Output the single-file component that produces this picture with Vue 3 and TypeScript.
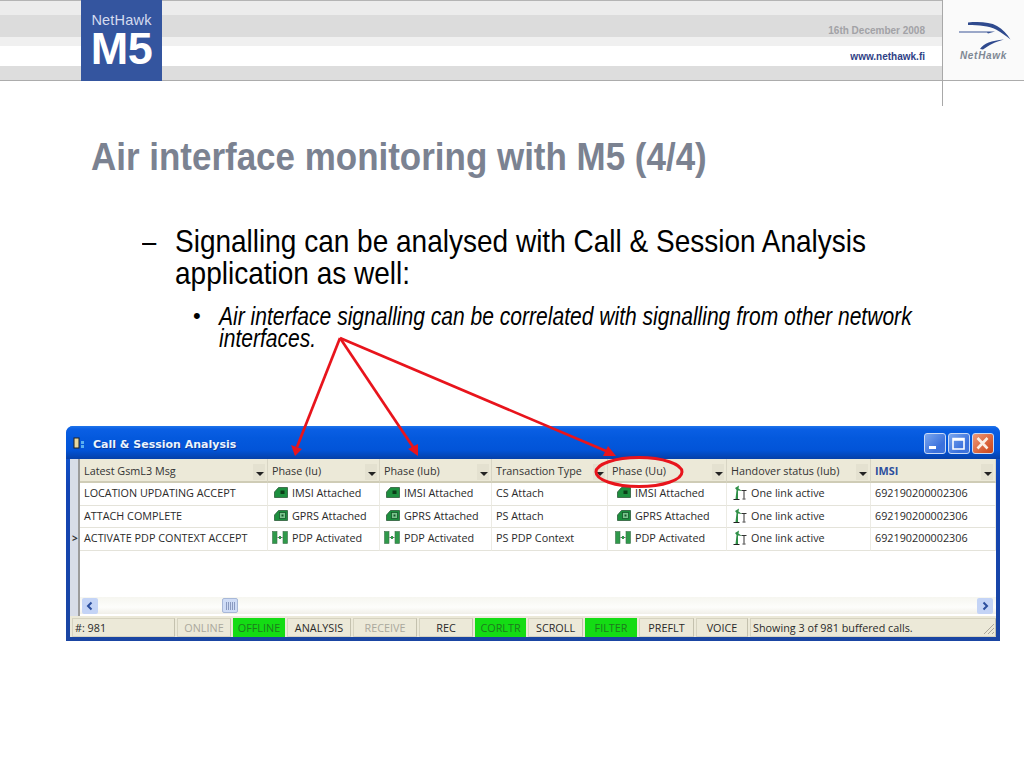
<script setup lang="ts">
type Cell = { text: string; icon?: 'imsi' | 'gprs' | 'pdp' | 'link' }
const columns = [
  { title: 'Latest GsmL3 Msg', width: 188 },
  { title: 'Phase (Iu)', width: 112 },
  { title: 'Phase (Iub)', width: 112 },
  { title: 'Transaction Type', width: 116 },
  { title: 'Phase (Uu)', width: 119 },
  { title: 'Handover status (Iub)', width: 144 },
  { title: 'IMSI', width: 125 },
]
const gridTemplate = columns.map((c) => c.width + 'px').join(' ')
const rows: Cell[][] = [
  [
    { text: 'LOCATION UPDATING ACCEPT' },
    { text: 'IMSI Attached', icon: 'imsi' },
    { text: 'IMSI Attached', icon: 'imsi' },
    { text: 'CS Attach' },
    { text: 'IMSI Attached', icon: 'imsi' },
    { text: 'One link active', icon: 'link' },
    { text: '692190200002306' },
  ],
  [
    { text: 'ATTACH COMPLETE' },
    { text: 'GPRS Attached', icon: 'gprs' },
    { text: 'GPRS Attached', icon: 'gprs' },
    { text: 'PS Attach' },
    { text: 'GPRS Attached', icon: 'gprs' },
    { text: 'One link active', icon: 'link' },
    { text: '692190200002306' },
  ],
  [
    { text: 'ACTIVATE PDP CONTEXT ACCEPT' },
    { text: 'PDP Activated', icon: 'pdp' },
    { text: 'PDP Activated', icon: 'pdp' },
    { text: 'PS PDP Context' },
    { text: 'PDP Activated', icon: 'pdp' },
    { text: 'One link active', icon: 'link' },
    { text: '692190200002306' },
  ],
]
const statusCells = [
  { text: 'ONLINE', width: 54, kind: 'dim' },
  { text: 'OFFLINE', width: 52, kind: 'on' },
  { text: 'ANALYSIS', width: 64, kind: '' },
  { text: 'RECEIVE', width: 64, kind: 'dim' },
  { text: 'REC', width: 54, kind: '' },
  { text: 'CORLTR', width: 51, kind: 'on' },
  { text: 'SCROLL', width: 55, kind: '' },
  { text: 'FILTER', width: 52, kind: 'on' },
  { text: 'PREFLT', width: 55, kind: '' },
  { text: 'VOICE', width: 52, kind: '' },
]
</script>

<template>
  <div class="page">
    <header class="top">
      <div class="band b1"></div>
      <div class="band b2"><span class="date">16th December 2008</span></div>
      <div class="band b3"></div>
      <div class="band b4"><span class="url">www.nethawk.fi</span></div>
      <div class="band b5"></div>
      <div class="m5">
        <span class="m5-name">NetHawk</span>
        <span class="m5-big">M5</span>
      </div>
      <div class="corner">
        <svg width="66" height="32" viewBox="0 0 66 32">
          <path d="M17 4.5 C28 3.5 39 4 46 8 C52 11.5 56 16 59.5 21.5 C55 18 50 14 45 11.5 C38 8 28 7 17 7 Z" fill="#2f4a8e" />
          <path d="M8 13.6 H44 L37 15.5 L36 14.6 H8 Z" fill="#3a5596" />
          <path d="M29 31 C33 25.5 40 22.5 53 21.5 C44 24 38 27 32 31.5 Z" fill="#2f4a8e" />
        </svg>
        <span class="corner-name">NetHawk</span>
      </div>
    </header>
    <div class="vline"></div>

    <h1 class="title"><span>Air interface monitoring with M5 (4/4)</span></h1>

    <section class="l1">
      <span class="dash">–</span>
      <div class="l1-text">
        <div>Signalling can be analysed with Call &amp; Session Analysis</div>
        <div>application as well:</div>
      </div>
    </section>
    <section class="l2">
      <span class="dot">•</span>
      <div class="l2-text">
        <div>Air interface signalling can be correlated with signalling from other network</div>
        <div>interfaces.</div>
      </div>
    </section>

    <section class="win">
      <div class="titlebar">
        <svg class="appicon" width="16" height="14" viewBox="0 0 16 14">
          <rect x="1" y="1" width="5" height="10" fill="#e8d9a0" stroke="#222" />
          <rect x="8" y="4" width="3" height="3" fill="#5ab0f0" />
          <rect x="8" y="8" width="3" height="3" fill="#5ab0f0" />
        </svg>
        <span class="wintitle">Call &amp; Session Analysis</span>
        <div class="winbtns">
          <span class="wb blue">
            <svg width="22" height="21" viewBox="0 0 22 21"><rect x="5" y="13" width="7" height="3" fill="#fff" /></svg>
          </span>
          <span class="wb blue">
            <svg width="22" height="21" viewBox="0 0 22 21"><path d="M5 5.5H16V16H5Z M5 7H16" fill="none" stroke="#fff" stroke-width="1.6" /></svg>
          </span>
          <span class="wb red">
            <svg width="22" height="21" viewBox="0 0 22 21"><path d="M5.5 5L15.5 15.5M15.5 5L5.5 15.5" stroke="#fbeee4" stroke-width="2.6" /></svg>
          </span>
        </div>
      </div>

      <div class="client">
        <div class="gutter">
          <span class="mark">&gt;</span>
        </div>
        <div class="gridwrap">
          <div class="gridbody">
            <div class="ghead" :style="{ gridTemplateColumns: gridTemplate }">
              <div v-for="c in columns" :key="c.title" class="hcell" :class="{ imsi: c.title === 'IMSI' }">
                <span>{{ c.title }}</span>
                <span class="drop"></span>
              </div>
            </div>
            <div v-for="(r, i) in rows" :key="i" class="grow" :style="{ gridTemplateColumns: gridTemplate }">
              <div
                v-for="(cell, j) in r"
                :key="j"
                class="cell"
                :class="{ iconcell: cell.icon && cell.icon !== 'pdp', pdpcell: cell.icon === 'pdp', uu: j === 4 }"
              >
                <svg v-if="cell.icon === 'imsi' || cell.icon === 'gprs'" class="ic" width="14" height="11" viewBox="0 0 14 11">
                  <path d="M0.5 5 L4.5 0.5 H13.5 V10.5 H0.5 Z" fill="#1c8f3e" stroke="#2d5a3a" stroke-width="0.8" />
                  <rect v-if="cell.icon === 'imsi'" x="6.5" y="3.5" width="4" height="3.5" fill="#0b3d18" />
                  <template v-else>
                    <rect x="5.5" y="2.5" width="6" height="6" fill="#7cc48e" stroke="#15592a" stroke-width="0.8" />
                    <rect x="7.5" y="4.5" width="2" height="2" fill="#15592a" />
                  </template>
                </svg>
                <svg v-else-if="cell.icon === 'pdp'" class="ic" width="16" height="13" viewBox="0 0 16 13">
                  <rect x="0.5" y="0.5" width="4.5" height="12" fill="#2f9a4b" stroke="#3d6e4b" stroke-width="0.6" />
                  <rect x="11" y="0.5" width="4.5" height="12" fill="#2f9a4b" stroke="#3d6e4b" stroke-width="0.6" />
                  <path d="M5.5 6.5H10.5" stroke="#666" stroke-width="1" />
                  <rect x="7" y="5" width="2" height="3" fill="#2f9a4b" />
                </svg>
                <svg v-else-if="cell.icon === 'link'" class="ic" width="14" height="15" viewBox="0 0 14 15">
                  <path d="M2.5 14 L3.5 5 L2 3 L6 0.5 L5.5 3.5 L9 6 L5 5.5 L5 14 Z" fill="#2f8f47" />
                  <path d="M0.5 14.5 H6.5" stroke="#222" stroke-width="1" />
                  <path d="M8.5 5.5 H13.5 M11 5.5 V13.5 M9.5 14 H12.5" stroke="#333" stroke-width="1" fill="none" />
                </svg>
                <span>{{ cell.text }}</span>
              </div>
            </div>
          </div>
          <div class="hscroll">
            <span class="arrowbtn">
              <svg width="10" height="10" viewBox="0 0 10 10"><path d="M6.5 1.5L3 5L6.5 8.5" fill="none" stroke="#2c4f9e" stroke-width="2" /></svg>
            </span>
            <div class="track">
              <span class="thumb"><i></i><i></i><i></i><i></i><i></i></span>
            </div>
            <span class="arrowbtn">
              <svg width="10" height="10" viewBox="0 0 10 10"><path d="M3.5 1.5L7 5L3.5 8.5" fill="none" stroke="#2c4f9e" stroke-width="2" /></svg>
            </span>
          </div>
        </div>
      </div>

      <div class="statusbar">
        <div class="scell first">#: 981</div>
        <div
          v-for="s in statusCells"
          :key="s.text"
          class="scell"
          :class="s.kind"
          :style="{ width: s.width + 'px' }"
        >{{ s.text }}</div>
        <div class="scell msg">Showing 3 of 981 buffered calls.</div>
        <svg class="grip" width="13" height="13" viewBox="0 0 13 13">
          <path d="M12 2L2 12M12 6L6 12M12 10L10 12" stroke="#aaa69a" stroke-width="1" />
        </svg>
      </div>
    </section>

    <svg class="overlay" width="1024" height="768" viewBox="0 0 1024 768">
      <g stroke="#e8141c" stroke-width="2.7" fill="none">
        <path d="M340 338L297 447" />
        <path d="M340 338L413 447" />
        <path d="M340 338L606 451" />
        <ellipse cx="639" cy="472" rx="43" ry="14.5" stroke-width="3" />
      </g>
      <g fill="#e8141c">
        <path d="M295 456L291 445L302 449Z" />
        <path d="M418 456L408 449L418 444Z" />
        <path d="M616 456L603 456L608 446Z" />
      </g>
    </svg>
  </div>
</template>

<style>
html, body { margin: 0; background: #fff; }
</style>

<style scoped>
.page {
  position: relative;
  width: 1024px;
  height: 768px;
  overflow: hidden;
  background: #fff;
  font-family: "Liberation Sans", Arial, sans-serif;
}
.top {
  position: relative;
  height: 81px;
  display: flex;
  flex-direction: column;
  border-bottom: 1px solid #acacac;
  border-top: 1px solid #b4b4b4;
  box-sizing: border-box;
}
.band {
  display: flex;
  align-items: center;
  justify-content: flex-end;
  padding-right: 99px;
}
.b1 { height: 14px; background: #ececec; }
.b2 { height: 22px; background: #dcdcdc; }
.b3 { height: 9px; background: #f0f0f0; }
.b4 { height: 20px; background: #fff; }
.b5 { height: 14px; background: #dddddd; }
.date { font-size: 10px; font-weight: 700; color: #a2a2a6; padding-top: 9px; }
.url { font-size: 10px; font-weight: 700; color: #2f3f86; }
.m5 {
  position: absolute;
  left: 81px;
  top: -1px;
  width: 81px;
  height: 81px;
  background: #34559f;
  color: #fff;
  display: flex;
  flex-direction: column;
  align-items: center;
}
.m5-name {
  margin-top: 13px;
  font-size: 14.5px;
  line-height: 15px;
  color: #d4dbef;
  letter-spacing: 0.2px;
}
.m5-big {
  font-size: 45px;
  font-weight: 700;
  line-height: 38px;
  margin-top: 2px;
  letter-spacing: -0.5px;
}
.corner {
  position: absolute;
  left: 943px;
  top: -1px;
  width: 81px;
  height: 80px;
  background: #fafafa;
  display: flex;
  flex-direction: column;
  align-items: center;
  padding-top: 18px;
  box-sizing: border-box;
}
.corner-name {
  font-size: 10px;
  line-height: 12px;
  font-weight: 700;
  font-style: italic;
  color: #7f8894;
  letter-spacing: 0.7px;
}
.vline {
  position: absolute;
  left: 942px;
  top: 0;
  width: 1px;
  height: 106px;
  background: #a8a8a8;
}
.title {
  margin: 53px 0 0 91px;
  height: 46px;
  font-size: 38px;
  line-height: 46px;
  font-weight: 700;
  color: #7b8291;
  white-space: nowrap;
}
.title span { display: inline-block; transform: scaleX(0.92); transform-origin: left center; }
.l1 {
  display: flex;
  margin: 45px 0 0 142px;
  color: #000;
  font-size: 32px;
  line-height: 32px;
}
.dash { width: 33px; flex: none; transform: scaleX(0.8); transform-origin: left center; }
.l1-text { white-space: nowrap; transform: scaleX(0.875); transform-origin: left center; }
.l2 {
  display: flex;
  margin: 16px 0 0 193px;
  font-size: 25px;
  line-height: 22px;
  font-style: italic;
}
.dot { width: 26px; flex: none; font-style: normal; font-size: 22px; }
.l2-text { white-space: nowrap; transform: scaleX(0.842); transform-origin: left center; }

.win {
  position: absolute;
  left: 66px;
  top: 426px;
  width: 934px;
  height: 215px;
  box-sizing: border-box;
  background: linear-gradient(180deg, #0b5fe0 0, #1244b4 60px, #1a45a2 100%);
  border-radius: 7px 7px 0 0;
  padding: 0 4px 4px;
  display: flex;
  flex-direction: column;
  font-family: "Open Sans", "Noto Sans", sans-serif;
  font-size: 10.8px;
  color: #2a2a2a;
}
.titlebar {
  height: 33px;
  flex: none;
  display: flex;
  align-items: center;
  margin: 0 -4px;
  padding-left: 7px;
  padding-right: 6px;
  border-radius: 7px 7px 0 0;
  background: linear-gradient(180deg, #1f74ea 0, #0a5fe4 3px, #0459dd 12px, #0254d8 24px, #0640a8 33px);
}
.appicon { flex: none; margin-top: 2px; }
.wintitle {
  margin-left: 4px;
  margin-top: 3px;
  font-family: "DejaVu Sans", sans-serif;
  font-size: 11px;
  font-weight: 700;
  color: #eaf4ff;
  text-shadow: 1px 1px 0 #0a3a99;
}
.winbtns { margin-left: auto; display: flex; gap: 2px; margin-top: 1px; }
.wb {
  width: 22px;
  height: 21px;
  border: 1px solid #c9daf6;
  border-radius: 3px;
  box-sizing: border-box;
  display: flex;
  align-items: center;
  justify-content: center;
  overflow: hidden;
}
.wb svg { flex: none; }
.blue { background: linear-gradient(135deg, #7aa6ee, #3a70dc 70%, #3f74dc); }
.red { background: linear-gradient(135deg, #ee9a7a, #d65a30 70%, #c9481e); }

.client {
  flex: 1;
  display: flex;
  min-height: 0;
  background: #fff;
}
.gutter {
  width: 10px;
  flex: none;
  position: relative;
  background: #d8dde8;
  border-right: 2px solid #9c9c9c;
  box-sizing: border-box;
}
.mark {
  position: absolute;
  left: 2px;
  top: 72px;
  font-size: 10px;
  font-weight: 700;
  line-height: 14px;
  color: #333;
}
.gridwrap {
  flex: 1;
  min-width: 0;
  display: flex;
  flex-direction: column;
}
.gridbody { flex: 1; min-height: 0; }
.ghead, .grow { display: grid; }
.ghead { height: 24px; }
.hcell {
  position: relative;
  display: flex;
  align-items: center;
  padding-left: 4px;
  background: #ece9d8;
  border-right: 1px solid #d8d5c4;
  border-bottom: 2px solid #cfccb6;
  box-sizing: border-box;
  color: #333;
  white-space: nowrap;
  overflow: hidden;
}
.hcell.imsi { color: #2c4f9e; font-weight: 700; }
.drop {
  position: absolute;
  right: 2px;
  top: 5px;
  width: 12px;
  height: 16px;
  background: #e4e1d0;
}
.drop::after {
  content: "";
  position: absolute;
  left: 3px;
  top: 8px;
  border-left: 4px solid transparent;
  border-right: 4px solid transparent;
  border-top: 4px solid #222;
}
.grow { height: 22.5px; }
.cell {
  display: flex;
  align-items: center;
  padding: 0 0 2px 4px;
  border-right: 1px solid #ecebe4;
  border-bottom: 1px solid #e4e3da;
  box-sizing: border-box;
  white-space: nowrap;
  overflow: hidden;
  background: #fff;
}
.iconcell { padding-left: 6px; }
.pdpcell { padding-left: 4px; }
.iconcell.uu { padding-left: 9px; }
.pdpcell.uu { padding-left: 7px; }
.ic { flex: none; margin-right: 4px; }
.hscroll {
  height: 17px;
  flex: none;
  display: flex;
  align-items: center;
  background: linear-gradient(180deg, #f6f6f0, #fdfdfb 60%, #f0efe8);
  padding: 0 3px 0 2px;
  margin-bottom: 2px;
}
.arrowbtn {
  width: 16px;
  height: 16px;
  flex: none;
  background: #c4d4f6;
  border-radius: 2px;
  display: flex;
  align-items: center;
  justify-content: center;
}
.track { flex: 1; display: flex; padding-left: 124px; }
.thumb {
  width: 16px;
  height: 15px;
  background: #cfdcf6;
  border: 1px solid #a8b8d8;
  border-radius: 2px;
  box-sizing: border-box;
  display: flex;
  justify-content: center;
  align-items: center;
  gap: 1px;
}
.thumb i { width: 1px; height: 8px; background: #8a9ac0; }
.statusbar {
  position: relative;
  height: 21px;
  flex: none;
  display: flex;
  gap: 2px;
  padding-top: 2px;
  box-sizing: border-box;
  background: #ece9d8;
}
.scell {
  box-sizing: border-box;
  display: flex;
  align-items: center;
  justify-content: center;
  white-space: nowrap;
  border: 1px solid #d6d3c0;
  border-right-color: #c4c1ae;
  color: #2a2a2a;
}
.scell.first { width: 103px; justify-content: flex-start; padding-left: 2px; margin-left: 2px; }
.scell.dim { color: #aaa89c; }
.scell.on { background: #14dc14; color: #1e7a1e; border-color: #14dc14; }
.scell.msg { flex: 1; justify-content: flex-start; padding-left: 2px; }
.grip { position: absolute; right: 1px; bottom: 2px; }
.overlay {
  position: absolute;
  left: 0;
  top: 0;
  pointer-events: none;
}
</style>
